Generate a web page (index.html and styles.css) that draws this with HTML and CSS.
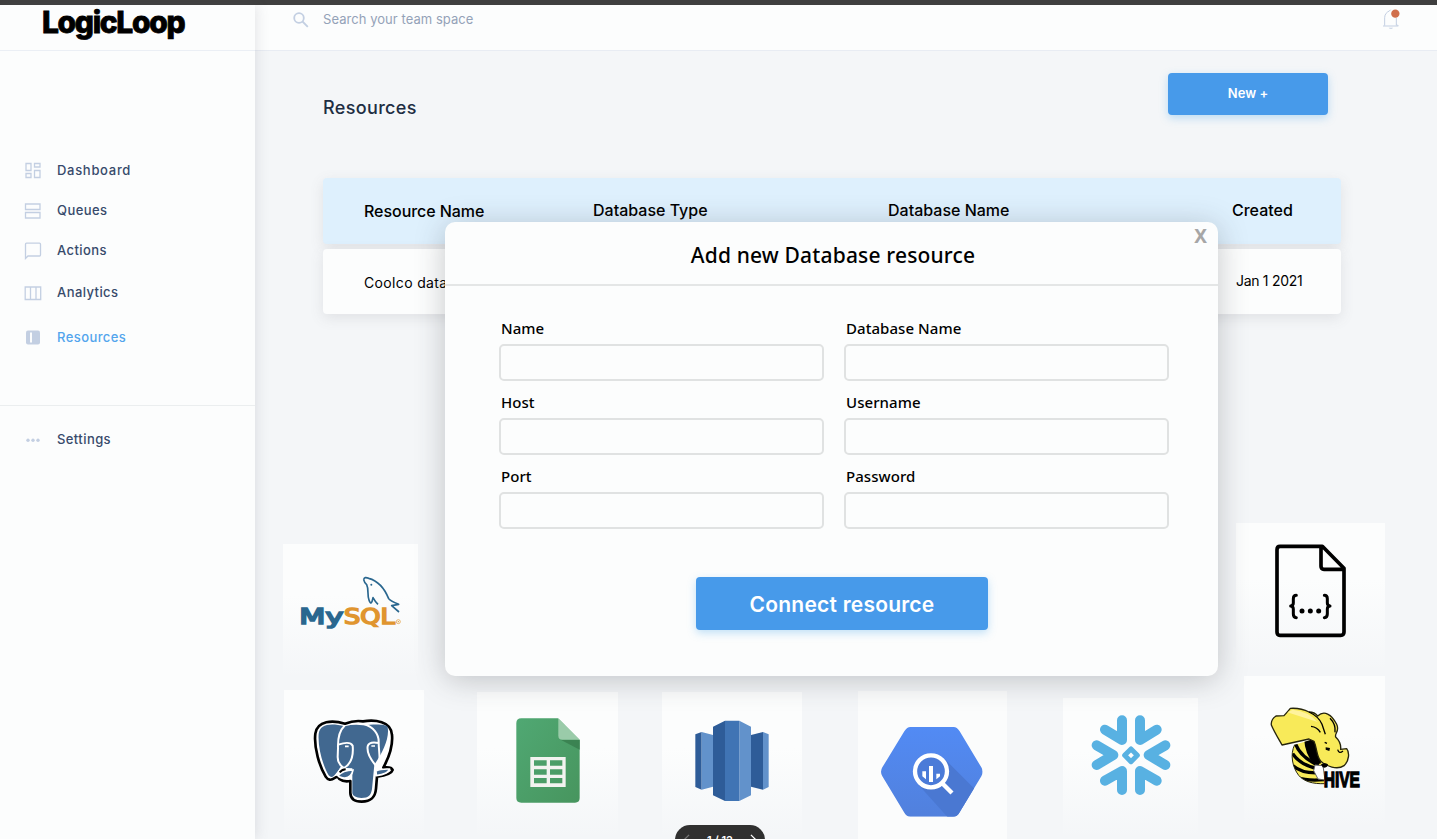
FILE: index.html
```html
<!DOCTYPE html>
<html lang="en">
<head>
<meta charset="utf-8">
<title>LogicLoop – Resources</title>
<link rel="stylesheet" href="styles.css">
</head>
<body>
<div class="strip"></div>
<div class="shell">
  <aside class="sidebar">
    <div class="brand"><span class="brand-name">LogicLoop</span></div>
    <nav class="nav">
      <a class="nav-item"><svg class="nav-icon" viewBox="0 0 18 18"><path d="M2 1.500h5v7H2zM10.500 1.500h5.500v3.500h-5.500zM2 11.500h5v4H2zM10.500 8.500h5.500v7h-5.500z"/></svg><span class="t-dashboard">Dashboard</span></a>
      <a class="nav-item"><svg class="nav-icon" viewBox="0 0 18 18"><path d="M1.500 2h14.500v5.500H1.500zM1.500 10.500h14.500v5.500H1.500z"/></svg><span>Queues</span></a>
      <a class="nav-item"><svg class="nav-icon" viewBox="0 0 18 18"><path d="M1.500 16.500V2.200q0-1 1-1H15.500q1 0 1 1V13q0 1-1 1H4z"/></svg><span>Actions</span></a>
      <a class="nav-item analytics"><svg class="nav-icon" viewBox="0 0 18 18"><path d="M1.200 3h15.500v12.500H1.200zM6.500 3v12.500M12 3v12.500"/></svg><span>Analytics</span></a>
      <a class="nav-item active"><svg class="nav-icon" viewBox="0 0 18 18"><rect x="2" y="1.500" width="14" height="14" rx="2" fill="#c3cfe2" stroke="none"/><path d="M7 3.500v10" stroke="#fcfdfd" stroke-width="2"/></svg><span>Resources</span></a>
    </nav>
    <div class="nav-footer">
      <a class="nav-item"><svg class="nav-icon" viewBox="0 0 18 18"><g fill="#c3cfe2" stroke="none"><circle cx="4" cy="9.200" r="1.700"/><circle cx="9" cy="9.200" r="1.700"/><circle cx="14" cy="9.200" r="1.700"/></g></svg><span>Settings</span></a>
    </div>
  </aside>

  <main class="main">
    <header class="topbar">
      <svg class="search-icon" viewBox="0 0 16 16"><circle cx="6" cy="6" r="4.800"/><path d="M9.500 9.500l5.300 5.300"/></svg>
      <span class="search-text">Search your team space</span>
      <svg class="bell" viewBox="0 0 54 66"><path d="M3 54h46M8 53V29C8 18 15 12 22 9M22 9l4-4M43 30v23M49 54l-5-5" fill="none" stroke="#c3cfe2" stroke-width="3"/><path d="M20 59h13q-6 7-13 0" fill="#c3cfe2"/><circle cx="40" cy="17" r="12.500" fill="#d06f4c"/></svg>
    </header>

    <section class="content">
      <div class="page-head">
        <h1 class="page-title">Resources</h1>
        <button class="btn btn-new">New +</button>
      </div>

      <div class="table">
        <div class="row row-head"><span class="c-name">Resource Name</span><span>Database Type</span><span>Database Name</span><span>Created</span></div>
        <div class="row row-body"><span class="c-value">Coolco database</span><span></span><span></span><span class="c-date">Jan 1 2021</span></div>
      </div>

      <div class="sources sources-top">
        <div class="tile mysql">
          <svg viewBox="39 42 405 405">
            <path d="M281 149q2-10 15-4c30 8 48 31 60 61q4 7 30 17l-21 4 22 19M281 149q2 9 9 15c7 14 1 30 7 46q4 14 9 5l3-12q7 13 15 20" fill="none" stroke="#2a678f" stroke-width="5" stroke-linejoin="round"/>
            <circle cx="304" cy="164" r="3" fill="#2a678f"/>
            <g class="mysql-word"><text x="88" y="282" textLength="132" lengthAdjust="spacingAndGlyphs" fill="#2a678f" stroke="#2a678f">My</text><text x="222" y="282" textLength="152" lengthAdjust="spacingAndGlyphs" fill="#e0952f" stroke="#e0952f">SQL</text></g>
            <circle cx="385" cy="275" r="6" fill="none" stroke="#e0952f" stroke-width="2"/><circle cx="385" cy="275" r="2" fill="#e0952f"/>
          </svg>
        </div>
        <div class="tile json">
          <svg viewBox="48 39 447 447"><g fill="none" stroke="#000" stroke-width="11" stroke-linejoin="round" stroke-linecap="round">
            <path d="M180 109h127l65 66v191q0 10-10 10H180q-9 0-9-10V119q0-10 9-10zM303 111v58q0 9 9 9h58"/>
            <path d="M229 256q-9 0-9 10v13q0 8-8 9q8 1 8 9v15q0 10 9 11M313 256q9 0 9 10v13q0 8 8 9q-8 1-8 9v15q0 10-9 11" stroke-width="9"/></g>
            <g><circle cx="246" cy="303" r="7.500"/><circle cx="271" cy="303" r="7.500"/><circle cx="296" cy="303" r="7.500"/></g></svg>
        </div>
      </div>

      <div class="sources sources-bottom">
        <div class="tile postgres">
          <svg viewBox="42 30 420 447">
            <path d="M225 131C188 120 142 121 136 161c-5 42 13 99 31 129q10 16 27 4q10-7 14 3q13 10 33 6v36q1 26 34 26c30-1 41-14 43-39l3-36c24-3 44-9 47-20q-4-10-28-7c15-28 29-67 26-98C364 122 314 119 279 124q-27-4-54 7z" fill="#fff" stroke="#000" stroke-width="8" stroke-linejoin="round"/>
            <path d="M224 139C182 128 149 132 146 162c-3 42 13 95 30 124q9 10 18-1l18-22 35 2v75q3 13 27 14c23 0 29-9 32-27l7-73c25-35 46-80 40-112C353 132 315 132 279 136q-27-4-55 3z" fill="#416890"/>
            <g fill="none" stroke="#fff" stroke-width="6" stroke-linecap="round"><path d="M223 138c-17 16-20 39-19 67l-1 26c0 15 9 27 19 33 14-8 30-24 26-67q-8-15-43-3M282 133c28 7 45 29 44 54 0 31 8 56-2 77-14-15-35-40-31-65q4-16 33-10M213 264q-4 8-11 18"/></g>
            <path d="M204 287q14-16 45-17-4 22-24 24-15 0-21-7zM318 273q14-7 40-6-3 15-39 20z" fill="#416890" stroke="#fff" stroke-width="5"/>
            <path d="M209 277q8-9 18-9" stroke="#000" stroke-width="6"/><path d="M225 199h11M304 198h11" stroke="#fff" stroke-width="5"/>
          </svg>
        </div>
        <div class="tile sheets">
          <svg viewBox="21 36 423 441"><defs><linearGradient id="green" x2="1" y2="1"><stop stop-color="#50a873"/><stop offset="1" stop-color="#47955e"/></linearGradient></defs>
            <path d="M154 115h110l65 65v174q0 14-14 14H154q-15 0-15-14V129q0-14 15-14z" fill="url(#green)"/><path d="M272 179h57v30z" fill="#3b8352"/><path d="M265 115l64 64h-52q-12 0-12-12z" fill="#9acba9"/>
            <path d="M181 231h106v90H181zM192 241v16h38v-16zM240 241v16h37v-16zM192 268v16h38v-16zM240 268v16h37v-16zM192 294v16h38v-16zM240 294v16h37v-16z" fill="#f2f3f0" fill-rule="evenodd"/></svg>
        </div>
        <div class="tile redshift">
          <svg viewBox="576 36 420 441"><path fill="#2e5c98" d="M676 163l19-7v173l-19-8zM729 140l36-18v241l-36-17zM843 165l36-9v173l-36-9z"/><path fill="#6292cb" d="M695 156l34 9v155l-34 9zM808 122l35 18v206l-35 17zM879 156l17 7v158l-17 8z"/><path fill="#4074b4" d="M765 122h43v241h-43z"/></svg>
        </div>
        <div class="tile bigquery">
          <svg viewBox="24 33 447 444"><defs><clipPath id="hex"><path d="M181 141h130q10 0 18 13l65 108q8 13 0 27l-66 109q-7 12-18 12H181q-11 0-18-12L97 289q-8-14 0-27l66-108q8-13 18-13z"/></clipPath><linearGradient id="blue" x2="0" y2="1"><stop stop-color="#528bf5"/><stop offset="1" stop-color="#5180dc"/></linearGradient></defs>
            <g clip-path="url(#hex)"><path d="M80 130h340v290H80z" fill="url(#blue)"/><path d="M284 237l130 130v70H316L206 315z" fill="#4a78d2"/></g><circle cx="243" cy="274" r="48" fill="#4b7bd8" stroke="#fff" stroke-width="13"/><path d="M279 312l27 27" stroke="#fff" stroke-width="13"/><path d="M217 274h11v24l-11-9zM237 258h12v48h-12zM259 281h11v8l-11 9z" fill="#fff"/></svg>
        </div>
        <div class="tile snowflake">
          <svg viewBox="39 54 405 423"><g fill="none" stroke="#58b1e2" stroke-width="30" stroke-linecap="round" stroke-linejoin="round"><path d="M216 121v59l-51-31M270 121v59l50-31M216 330v-57l-51 29M270 330v-57l50 29" fill="#58b1e2" fill-opacity="0"/><path d="M140 196l50 29-50 30M346 196l-50 29 50 30"/></g><path d="M243 207l19 19-19 19-19-19z" fill="none" stroke="#58b1e2" stroke-width="15" stroke-linejoin="round"/></svg>
        </div>
        <div class="tile hive">
          <svg viewBox="27 18 423 459"><defs><clipPath id="bee"><path d="M179 224c-15 31-6 69 12 92 16 19 43 26 77 25l-5-60-25-75z"/></clipPath></defs>
            <g clip-path="url(#bee)"><path d="M160 200h130v150H160z" fill="#f8ea59"/><path d="M181 221q16 42 70 65M173 251q24 36 80 46M174 287q28 25 83 21M187 323q28 10 80 6" fill="none" stroke="#000" stroke-width="10"/><path d="M207 205l39 0 12 75-18 6q-30-30-33-81z"/></g>
            <path d="M179 224c-15 31-6 69 12 92 16 19 43 26 77 25" fill="none" stroke="#26250c" stroke-width="3"/>
            <path d="M240 285l24 2 6 43-21-3-13-25z" fill="#fff" stroke="#666" stroke-width="3"/>
            <path d="M248 138c19-18 42-6 57 25 10 21-7 26-3 38q17 16 15 37l18-2c9 11 8 36-8 51-20 14-54 2-70-14-13-15-10-36-20-59l-15-7q-41 9-81 18c-10-18-22-37-32-60q-2-16 14-27l24-1q9-10 19-22 31-2 56 11 17 0 26 12z" fill="#f8ea59" stroke="#26250c" stroke-width="4" stroke-linejoin="round"/>
            <path d="M173 119q50 6 75 37l-91-29z" fill="#fff39d"/><path d="M222 126q30 14 39 37l10 30M228 169q19 2 28 18M285 145q18 18 15 42M269 217l7 3M308 239q4 14 16 4" fill="none" stroke="#000" stroke-width="4"/><path d="M272 232l13 2-2 9-11-4zM258 283q11-7 21 0-2 13-16 9z"/>
            <text class="hive-outline" x="266" y="352" textLength="109" lengthAdjust="spacingAndGlyphs">HIVE</text></svg>
        </div>
      </div>
    </section>
  </main>
</div>

<div class="modal" role="dialog">
  <header class="modal-head"><h2 class="modal-title">Add new Database resource</h2><span class="close">X</span></header>
  <form class="fields">
    <label class="field"><span>Name</span><input></label>
    <label class="field"><span>Database Name</span><input></label>
    <label class="field"><span>Host</span><input></label>
    <label class="field"><span>Username</span><input></label>
    <label class="field"><span>Port</span><input></label>
    <label class="field"><span>Password</span><input></label>
  </form>
  <button class="btn btn-connect">Connect resource</button>
</div>

<div class="pager"><svg viewBox="0 0 8 14"><path d="M7 1L1 7l6 6" stroke="#777"/></svg><span>1 / 12</span><svg viewBox="0 0 8 14"><path d="M1 1l6 6-6 6" stroke="#fff"/></svg></div>
</body>
</html>
```
FILE: styles.css
```css
* { box-sizing: border-box; }
body { margin: 0; width: 1437px; height: 839px; overflow: hidden; position: relative; background: #f4f6f8; font-family: Inter, "Open Sans", sans-serif; color: #000; }
.strip { height: 5px; background: #3f3f3f; }
.shell { display: flex; height: 834px; }

.sidebar { width: 255px; flex: none; background: #fcfdfd; box-shadow: 2px 0 12px rgba(90, 95, 105, .14); z-index: 1; }
.brand { height: 46px; padding-left: 42px; border-bottom: 1px solid #ebeff5; line-height: 34px; }
.brand-name { font-size: 30px; font-weight: 800; letter-spacing: -1.35px; -webkit-text-stroke: .8px #000; }
.nav { height: 355px; padding-top: 100px; border-bottom: 1px solid #ebeeef; }
.nav-item { display: flex; align-items: center; gap: 15px; height: 40px; padding-left: 24px; font-size: 13px; font-weight: 500; letter-spacing: .42px; color: #374a6b; }
.nav-item span { padding-bottom: 2px; }
.nav-item .t-dashboard { letter-spacing: .7px; }
.nav-item.analytics { height: 44px; }
.nav-item.active { height: 46px; color: #53a5ed; }
.nav-icon { width: 18px; height: 18px; fill: none; stroke: #c3cfe2; stroke-width: 1.3; }
.nav-footer { padding-top: 14px; }

.main { flex: 1; display: flex; flex-direction: column; }
.topbar { height: 46px; flex: none; display: flex; align-items: flex-start; padding: 7px 37px 0 37px; background: #fcfdfd; border-bottom: 1px solid #e8ecf3; }
.search-icon { width: 16px; height: 16px; fill: none; stroke: #c3cfe2; stroke-width: 1.8; margin: 0 14px 0 1px; }
.search-text { font-size: 13px; line-height: 15px; color: #94a2b8; letter-spacing: .05px; }
.bell { width: 18px; height: 22px; margin-left: auto; margin-top: -4px; }

.content { flex: 1; display: flex; flex-direction: column; }
.page-head { display: flex; justify-content: space-between; padding: 22px 109px 0 68px; height: 127px; }
.page-title { margin: 24px 0 0; font-size: 18px; line-height: 22px; font-weight: 500; letter-spacing: .35px; color: #202d42; }
.btn { border: 0; padding: 0; background: #479aea; color: #fff; border-radius: 4px; font-family: Inter, sans-serif; font-weight: 600; box-shadow: 0 3px 8px rgba(80, 170, 235, .35); }
.btn-new { width: 160px; height: 42px; font-size: 13px; padding-bottom: 2px; }

.table { margin: 0 96px 0 68px; display: grid; gap: 5px; }
.row { display: grid; grid-template-columns: 229px 295px 344px auto; align-items: center; padding-left: 41px; border-radius: 4px; box-shadow: 0 4px 14px rgba(90, 90, 100, .13); }
.row-head { height: 66px; background: #def0fd; font-size: 16px; font-weight: 500; padding-bottom: 2px; }
.c-name { padding-top: 2px; letter-spacing: -.05px; }
.row-body { height: 65px; background: #fcfdfd; font-size: 14px; padding-bottom: 2px; }
.c-value { padding-top: 4px; letter-spacing: .35px; }
.c-date { padding-left: 4px; letter-spacing: -.3px; }

.sources { display: flex; }
.tile { background: linear-gradient(#fcfdfd 38%, rgba(252, 253, 253, 0) 100%); }
.tile svg { display: block; width: 100%; }
.sources-top { height: 153px; margin-top: 209px; padding: 0 52px 0 28px; justify-content: space-between; }
.mysql { width: 135px; height: 135px; margin-top: 21px; }
.mysql-word { font: 61px "DejaVu Sans", sans-serif; stroke-width: 5px; }
.json { width: 149px; height: 149px; }
.sources-bottom { height: 163px; padding-left: 29px; }
.postgres { width: 140px; height: 149px; margin-top: 14px; }
.sheets { width: 141px; height: 147px; margin: 16px 0 0 53px; }
.redshift { width: 140px; height: 147px; margin: 16px 0 0 44px; }
.bigquery { width: 149px; height: 148px; margin: 15px 0 0 56px; background: #fbfcfc; }
.snowflake { width: 135px; height: 141px; margin: 22px 0 0 56px; }
.hive { width: 141px; height: 153px; margin-left: 46px; }
.hive-outline { font: bold 68px "Liberation Sans", sans-serif; fill: #000; stroke: #000; stroke-width: 4px; }

.modal { position: absolute; left: 445px; top: 222px; width: 773px; height: 454px; z-index: 2; background: #fcfdfd; border-radius: 10px; box-shadow: 0 4px 30px rgba(50, 54, 64, .27); }
.modal-head { position: relative; height: 64px; border-bottom: 2px solid #e4e6e6; text-align: center; padding-top: 18px; }
.modal-title { margin: 0 0 0 3px; font: 500 21px/30px "Noto Sans", "Open Sans", sans-serif; letter-spacing: .17px; }
.close { position: absolute; right: 11px; top: 3px; font: bold 19px/22px "Noto Sans", sans-serif; color: #a6a6a6; }
.fields { display: grid; grid-template-columns: 325px 325px; column-gap: 20px; padding: 31px 49px 0 54px; }
.field { height: 74px; font: 500 15px/23px "Noto Sans", "Open Sans", sans-serif; letter-spacing: .06px; }
.field span { display: block; padding-left: 2px; height: 27px; }
.field input { display: block; width: 325px; height: 37px; border: 2px solid #e0e2e2; border-radius: 5px; background: #fcfdfd; }
.btn-connect { display: block; width: 292px; height: 53px; margin: 38px 0 0 251px; font-size: 21px; letter-spacing: .22px; padding-top: 2px; }

.pager { position: absolute; left: 675px; top: 825px; width: 90px; height: 30px; border-radius: 15px; z-index: 3; background: #303030; color: #fff; display: flex; justify-content: space-between; align-items: center; padding: 0 8px; font-size: 11px; font-weight: 600; }
.pager svg { width: 7px; height: 12px; fill: none; stroke-width: 1.5; }
```
